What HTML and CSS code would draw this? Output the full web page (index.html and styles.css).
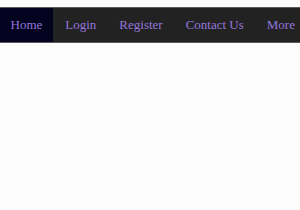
FILE: index.html
```html
<!DOCTYPE html>
<html lang="en">
<head>
    <meta charset="UTF-8">
    <title>Nav</title>
    <link rel="stylesheet" href="styles.css">
</head>
<body>
    <ul class="nav">
        <li><a href="#" class="active">Home</a></li>
        <li><a href="#">Login</a></li>
        <li><a href="#">Register</a></li>
        <li><a href="#">Contact Us</a></li>
        <li><a href="#">More</a></li>
    </ul>
</body>
</html>
```

FILE: styles.css
```css
body {
  margin: 0;
  background: #fdfcfd;
  font-family: "Liberation Serif", serif;
}

.nav {
  list-style: none;
  margin: 7px 0 0 0;
  padding: 0;
  display: flex;
  gap: 2px;
  background: #232222;
  border-top: 1px solid #5a5a5a;
  border-bottom: 1px solid #5a5a5a;
  white-space: nowrap;
  overflow: hidden;
}

.nav a {
  display: block;
  padding: 0 10.5px;
  line-height: 34px;
  font-size: 13px;
  color: #9476dc;
  text-decoration: none;
}

.nav a.active {
  background: #03031f;
}
```
